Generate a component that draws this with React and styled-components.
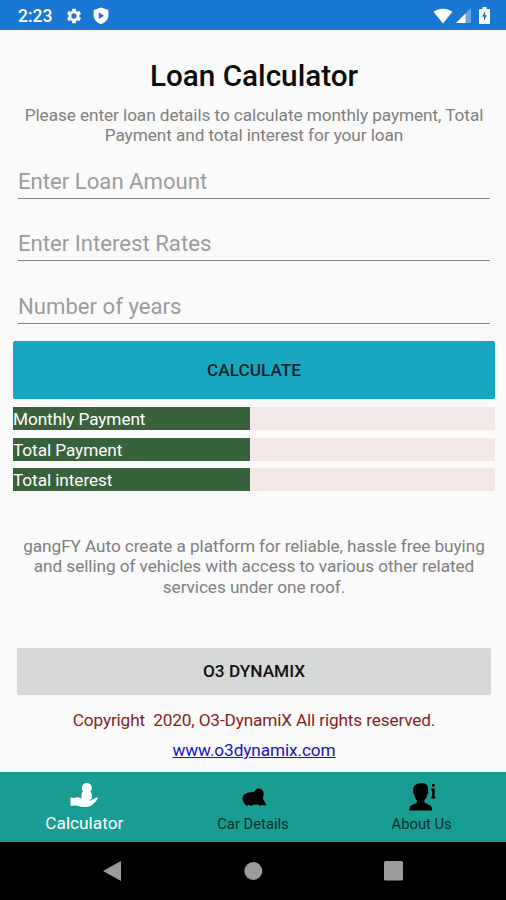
import { useState } from "react";
import { MdSettings } from "react-icons/md";
import styled, { createGlobalStyle } from "styled-components";

const GlobalStyle = createGlobalStyle`
  * {
    box-sizing: border-box;
  }

  body {
    margin: 0;
    background-color: #fafafa;
    font-family: Roboto, "Liberation Sans", sans-serif;
  }
`;

const Screen = styled.div`
  display: flex;
  flex-direction: column;
  width: 506px;
  height: 900px;
  overflow: hidden;
  background-color: #fafafa;
`;

const StatusBar = styled.header`
  display: flex;
  align-items: center;
  height: 30px;
  padding: 1px 16px 0 18px;
  background-color: #1976d2;
  color: #fff;
`;

const Clock = styled.span`
  width: 47px;
  font-size: 17.5px;
  font-weight: 500;
  line-height: 20px;
`;

const StatusIcons = styled.div`
  display: flex;
  align-items: center;
  gap: ${({ $gap }) => $gap}px;
  margin-left: ${({ $end }) => ($end ? "auto" : "0")};

  svg {
    display: block;
  }
`;

const Content = styled.main`
  display: flex;
  flex: 1;
  flex-direction: column;
  padding: 28px 11px 0 13px;
`;

const Title = styled.h1`
  margin: 0;
  color: #0c0c0c;
  font-size: 29.7px;
  font-weight: 500;
  line-height: 35px;
  text-align: center;
`;

const Description = styled.p`
  margin: ${({ $top }) => $top}px 0 0;
  color: #808080;
  font-size: 17.23px;
  letter-spacing: -0.08px;
  line-height: 20.3px;
  text-align: center;
  white-space: pre-line;
`;

const Fields = styled.div`
  display: flex;
  flex-direction: column;
  gap: 25.5px;
  margin: 16px 5px 0;
`;

const Field = styled.input`
  width: 472px;
  height: 37px;
  padding: 2px 0 0;
  border: 0;
  border-bottom: 1.5px solid #868686;
  outline: 0;
  background: transparent;
  color: #222;
  font-family: inherit;
  font-size: 22.15px;
  line-height: 26px;

  &::placeholder {
    color: #9c9c9c;
    opacity: 1;
  }
`;

const Button = styled.button`
  border: 0;
  border-radius: 2px;
  padding: 0;
  font-family: inherit;
  font-size: 17.23px;
  font-weight: 500;
  text-transform: uppercase;
`;

const CalculateButton = styled(Button)`
  height: 58.5px;
  margin-top: 17px;
  padding-top: 1px;
  background-color: #16a6bf;
  color: #08222a;
`;

const CompanyButton = styled(Button)`
  height: 47px;
  margin: 51px 4px 0;
  padding-bottom: 1px;
  background-color: #d6d7d7;
  color: #111;
`;

const Results = styled.div`
  display: flex;
  flex-direction: column;
  gap: 7.5px;
  margin-top: 8px;
`;

const ResultRow = styled.div`
  display: grid;
  grid-template-columns: 237px 1fr;
  height: 23px;
  background-color: #f3e7e7;
`;

const ResultLabel = styled.span`
  height: 23px;
  background-color: #37623a;
  color: #fff;
  font-size: 17.23px;
  letter-spacing: -0.08px;
  line-height: 24.5px;
`;

const Copyright = styled.p`
  margin: 15px 0 0;
  color: #851f24;
  font-size: 17.23px;
  letter-spacing: -0.15px;
  line-height: 20px;
  text-align: center;
  white-space: pre;
`;

const SiteLink = styled.a`
  align-self: center;
  margin-top: 10px;
  color: #1a10c4;
  font-size: 17.23px;
  letter-spacing: -0.1px;
  line-height: 20px;
`;

const TabBar = styled.nav`
  display: grid;
  grid-template-columns: repeat(3, 1fr);
  height: 70px;
  background-color: #199d93;
`;

const Tab = styled.button`
  display: flex;
  flex-direction: column;
  align-items: center;
  padding: 10px 0 0;
  border: 0;
  background: transparent;
  color: ${({ $active }) => ($active ? "#fff" : "#07302d")};
  font-family: inherit;
  font-size: ${({ $active }) => ($active ? 17.23 : 14.77)}px;
  line-height: 20px;

  svg {
    display: block;
    margin-bottom: ${({ $active }) => ($active ? 1 : 2)}px;
    color: ${({ $active }) => ($active ? "#fff" : "#000")};
  }
`;

const SystemBar = styled.footer`
  display: flex;
  align-items: center;
  justify-content: space-between;
  height: 58px;
  padding: 0 102px;
  background-color: #000;
  color: #9b9b9b;

  svg {
    display: block;
  }
`;

const SignalGroup = styled.div`
  display: flex;
  align-items: center;
  gap: 3px;
`;

const ShieldIcon = () => (
  <svg width="16" height="18" viewBox="0 0 16 18">
    <path
      d="M8 .5 15.4 3v5.6c0 4-3 7-7.4 8.6C3.6 15.6.6 12.6.6 8.6V3ZM5.8 5.5v6.6l5.3-3.3Z"
      fill="currentColor"
      fillRule="evenodd"
    />
  </svg>
);

const WifiIcon = () => (
  <svg width="20" height="16" viewBox="0 0 20 16">
    <path d="M.5 3.8C6-.4 14-.4 19.5 3.8L10 15.5Z" fill="currentColor" />
  </svg>
);

const SignalIcon = () => (
  <svg width="15" height="15" viewBox="0 0 15 15">
    <path d="M15 0v15H0Z" fill="#fff" opacity=".35" />
    <path d="M9.5 5.5V15H0Z" fill="#fff" />
  </svg>
);

const BatteryIcon = () => (
  <svg width="11" height="17" viewBox="0 0 11 17">
    <path
      d="M3.5 0h4v2H10q1 0 1 1v13q0 1-1 1H1q-1 0-1-1V3q0-1 1-1h2.5Z"
      fill="#fff"
    />
    <path d="M6.2 4 3 9.8h2v4l3-5.6H6.2Z" fill="#1976d2" />
  </svg>
);

const HandIcon = () => (
  <svg width="30" height="30" viewBox="0 0 30 30" fill="currentColor">
    <circle cx="17.8" cy="6" r="5.1" />
    <path d="M13.5 9.5h8l1.3 2.5v5l-2.5 1h-7l-.8-1v-5Z" />
    <path d="M1.5 15.5 5 16c2.5-1.3 5.5-1.2 8 .8h6.5c1.4 0 1.5 1.5.5 2 4-.5 5.5-3.4 9-3.2-1.5 3.8-4.5 6.5-7.5 8.3-3.5 1.3-8 1.2-11.500.3-2-.7-3.500-.8-5-.6l-3.500.3Z" />
  </svg>
);

const CarIcon = () => (
  <svg width="30" height="30" viewBox="0 0 30 30" fill="currentColor">
    <circle cx="20.8" cy="11.3" r="4.800" />
    <path d="M4.500 17.500c-.2-3.500 1.500-6 4.500-6.500 2.500-.8 5.500-.5 7.500-1.500l6-2 3 5-.6 4.500 3.600 6-2.800.6-1.500-.8-1.700.9-3.300-1.200-4.200.2-1.500 1.200-2.800-1.100-2.200 1.300-1.700-2.100-1.300-1.500Z" />
  </svg>
);

const PersonIcon = () => (
  <svg width="30" height="30" viewBox="0 0 30 30" fill="currentColor">
    <path d="M13.5 1.2c5.3-.7 8.2 2.4 7.6 7.4l.3 2.7-1.2 1.3c-.5 3-1.6 4.8-2.8 5.700v2.300l5.800 2.800c1.400.8 1.800 2.500 1.900 5H2.200c.1-2.800.8-4.300 2-5l5.700-2.700v-2.500c-1.500-1.200-2.300-3.100-2.700-5.600l-1-1.300V7c0-3.200 3-5.400 7.300-5.800Z" />
    <path d="M25 2h2.700v2.800H25zM24.300 6.500h3.400v8.300h.8v1.800h-4.200v-1.800h.8V8.200h-.8z" />
  </svg>
);

const tabs = [
  { id: "calculator", label: "Calculator", Icon: HandIcon },
  { id: "cars", label: "Car Details", Icon: CarIcon },
  { id: "about", label: "About Us", Icon: PersonIcon },
];

const fields = ["Enter Loan Amount", "Enter Interest Rates", "Number of years"];

const results = ["Monthly Payment", "Total Payment", "Total interest"];

const App = () => {
  const [activeTab, setActiveTab] = useState("calculator");

  return (
    <Screen>
      <GlobalStyle />
      <StatusBar>
        <Clock>2:23</Clock>
        <StatusIcons $gap={10}>
          <MdSettings size={18} />
          <ShieldIcon />
        </StatusIcons>
        <StatusIcons $end $gap={8}>
          <SignalGroup>
            <WifiIcon />
            <SignalIcon />
          </SignalGroup>
          <BatteryIcon />
        </StatusIcons>
      </StatusBar>
      <Content>
        <Title>Loan Calculator</Title>
        <Description $top={12}>
          {
            "Please enter loan details to calculate monthly payment, Total\nPayment and total interest for your loan"
          }
        </Description>
        <Fields>
          {fields.map((field) => (
            <Field key={field} placeholder={field} />
          ))}
        </Fields>
        <CalculateButton>Calculate</CalculateButton>
        <Results>
          {results.map((result) => (
            <ResultRow key={result}>
              <ResultLabel>{result}</ResultLabel>
            </ResultRow>
          ))}
        </Results>
        <Description $top={45}>
          {
            "gangFY Auto create a platform for reliable, hassle free buying\nand selling of vehicles with access to various other related\nservices under one roof."
          }
        </Description>
        <CompanyButton>O3 Dynamix</CompanyButton>
        <Copyright>{"Copyright  2020, O3-DynamiX All rights reserved."}</Copyright>
        <SiteLink href="#">www.o3dynamix.com</SiteLink>
      </Content>
      <TabBar>
        {tabs.map(({ id, label, Icon }) => (
          <Tab
            key={id}
            $active={id === activeTab}
            onClick={() => setActiveTab(id)}
          >
            <Icon />
            {label}
          </Tab>
        ))}
      </TabBar>
      <SystemBar>
        <svg width="20" height="22" viewBox="0 0 20 22">
          <path d="M19 1v20L1 11Z" fill="currentColor" />
        </svg>
        <svg width="20" height="20" viewBox="0 0 20 20">
          <circle cx="10.3" cy="10" r="9" fill="currentColor" />
        </svg>
        <svg width="20" height="20" viewBox="0 0 20 20">
          <rect width="19" height="19.5" rx="1.5" fill="currentColor" />
        </svg>
      </SystemBar>
    </Screen>
  );
};

export default App;
